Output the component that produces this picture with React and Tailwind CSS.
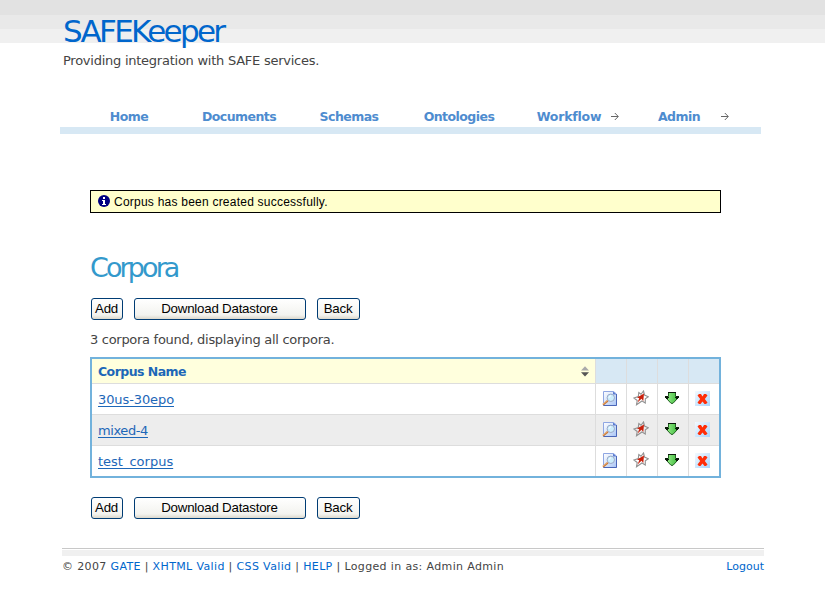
const NAV = [
  { label: "Home" },
  { label: "Documents" },
  { label: "Schemas" },
  { label: "Ontologies" },
  { label: "Workflow", arrow: "ml-[10px]", tracking: "tracking-[-0.2px]" },
  { label: "Admin", arrow: "ml-[21px]" },
];

const ROWS = [
  { name: "30us-30epo", tracking: "tracking-[-0.1px]" },
  { name: "mixed-4", tracking: "tracking-[-0.4px]" },
  { name: "test_corpus", tracking: "tracking-normal" },
];

function MenuArrow() {
  return (
    <svg className="h-[9px] w-[8px]" viewBox="0 0 8 9" fill="none" stroke="#666">
      <path d="M0 4.500h7M3.800 1l3.500 3.500L3.800 8" />
    </svg>
  );
}

function InfoIcon() {
  return (
    <svg className="h-3 w-3" viewBox="0 0 12 12">
      <circle cx="6" cy="6" r="6" fill="#000080" />
      <path d="M5 2h2v2H5zM4 5h3v4h1v1H4V9h1V6H4z" fill="#fff" />
    </svg>
  );
}

function ViewIcon() {
  return (
    <svg className="h-[15px] w-[15px]" viewBox="0 0 15 15">
      <defs>
        <linearGradient id="sheet" x1="0" y1="0" x2="1" y2="1">
          <stop offset="0" stopColor="#fff" />
          <stop offset="1" stopColor="#a9c5f5" />
        </linearGradient>
      </defs>
      <path d="M1.500 .5H11.500L14.500 3V14.500H1.500z" fill="url(#sheet)" stroke="#8fa6e2" />
      <path d="M1.500 14.500h13V3" fill="none" stroke="#4a66b8" />
      <path d="M11 .5V3.500h3.500z" fill="#5a7bd0" />
      <circle cx="8.800" cy="6.800" r="3.700" fill="#cdeefc" stroke="#9aa8c8" />
      <path d="M7 6.800q.3-1.800 2-2" fill="none" stroke="#fff" />
      <path d="M5.800 9.700L1 13.800" stroke="#c87a3c" strokeWidth="2" />
      <path d="M5.400 9.400L1 13" stroke="#f7c48a" strokeWidth=".8" />
    </svg>
  );
}

function StarIcon() {
  return (
    <svg className="h-4 w-4" viewBox="0 0 16 16" fill="none">
      <path
        d="M10.500 1L11.500 5L15.300 6.800L12.300 8.800L12.300 13L9 11L3.500 14.800L4.200 10.500L1 8L5.300 6.500L5.800 2.500L8 4.300z"
        stroke="#929292"
        strokeWidth="1.100"
      />
      <path d="M11 3.500L10.300 11L8.500 8.800L4.500 12.500L6.300 8.300L4 7.500z" fill="#c9200c" />
    </svg>
  );
}

function DownloadIcon() {
  return (
    <svg className="h-[12px] w-[14px]" viewBox="0 0 14 12">
      <defs>
        <linearGradient id="leaf" x1="0" y1="0" x2="1" y2="0">
          <stop offset="0" stopColor="#a0f090" />
          <stop offset="1" stopColor="#38b838" />
        </linearGradient>
      </defs>
      <path
        d="M3.500 .5H10.500V4.500H13.500L12 7L8 11.300H6L2 7L.5 4.500H3.500z"
        fill="url(#leaf)"
        stroke="#226022"
      />
      <path d="M0 4h3v1h1v1H3v1H1V6H0zM14 4h-3v1h-1v1h1v1h2V6h1zM3 0h8v1H3z" fill="#0a180a" />
    </svg>
  );
}

function DeleteIcon() {
  return (
    <svg className="h-[15px] w-[15px]" viewBox="0 0 15 15">
      <defs>
        <linearGradient id="tile" x1="0" y1="0" x2="1" y2="1">
          <stop offset="0" stopColor="#f4faff" />
          <stop offset="1" stopColor="#a8d4fc" />
        </linearGradient>
      </defs>
      <path d="M0 0h15v15H0z" fill="url(#tile)" />
      <path
        d="M4 3h2l1.500 2.500L9 3h2l1.500 1.500L9.800 8l2.700 3.500L11 13H9.500L7.500 10.500L5.500 13H4L2.500 11.500L5.200 8L2.500 4.500z"
        fill="#ff2e08"
      />
    </svg>
  );
}

function SortIcon() {
  return (
    <svg className="h-[11px] w-[8px]" viewBox="0 0 8 11">
      <path d="M0 4.500L4 .3L8 4.500z" fill="#aaa" />
      <path d="M0 6.300h8L4 10.500z" fill="#555" />
    </svg>
  );
}

function Button({ children, width }) {
  return (
    <button
      className={`${width} flex h-[22px] items-center justify-center rounded-[3px] border border-[#003c74] bg-[linear-gradient(#fff,#f3f3ef_80%,#dcd8cc)] pr-px pb-px font-['Liberation_Sans',Arial,sans-serif] text-[13.3px] tracking-[-0.22px] whitespace-nowrap text-black`}
    >
      {children}
    </button>
  );
}

function Buttons() {
  return (
    <div className="ml-px flex gap-[11px]">
      <Button width="w-8">Add</Button>
      <Button width="w-[172px]">Download Datastore</Button>
      <Button width="w-[43px]">Back</Button>
    </div>
  );
}

export default function App() {
  return (
    <div className="h-[596px] w-[825px] overflow-hidden bg-white bg-[linear-gradient(#e2e2e2_0_15px,#e9e9e9_15px_29px,#f0f0f0_29px_43px,#fff_43px)] font-['DejaVu_Sans',Verdana,sans-serif] text-[13px] text-[#444]">
      <header className="h-[107px] pt-[13px] pl-[63px]">
        <h1 className="h-[39px] text-[31px] leading-[37px] tracking-[-2.7px] text-[#06c]">SAFEKeeper</h1>
        <p className="leading-[18px] tracking-[-0.25px]">Providing integration with SAFE services.</p>
      </header>

      <nav className="ml-[60px] flex h-[27px] w-[701px] border-b-[7px] border-[#d7e8f4] pl-[14px] text-[12.5px] font-bold tracking-[-0.55px] text-[#4e8ccf]">
        {NAV.map((n) => (
          <a key={n.label} className="flex h-5 w-[110px] items-center">
            <span className="flex-1" />
            <span className={n.tracking}>{n.label}</span>
            <span className="flex flex-1 items-center pb-[2px]">
              {n.arrow && (
                <span className={n.arrow}>
                  <MenuArrow />
                </span>
              )}
            </span>
          </a>
        ))}
      </nav>

      <main className="mt-14 ml-[90px] w-[631px]">
        <div className="flex h-[23px] items-center gap-1 border border-black bg-[#ffc] pl-[7px] font-['Liberation_Sans',Arial,sans-serif] text-[12px] tracking-[0.23px] text-black">
          <span className="pb-px">
            <InfoIcon />
          </span>
          Corpus has been created successfully.
        </div>

        <h2 className="mt-[38px] h-[47px] text-[27px] leading-[34px] tracking-[-2.9px] text-[#39c]">Corpora</h2>
        <Buttons />
        <p className="mt-[11px] h-[26px] leading-[18px] tracking-[-0.29px]">3 corpora found, displaying all corpora.</p>

        <table className="w-[631px] table-fixed border-separate border-spacing-0 border-2 border-[#72b2dc] text-[#1d67b8]">
          <colgroup>
            <col className="w-[503px]" />
            <col className="w-[31px]" />
            <col className="w-[31px]" />
            <col className="w-[31px]" />
            <col className="w-[31px]" />
          </colgroup>
          <thead>
            <tr className="h-[25px] bg-[#d7e8f4]">
              <th className="border-b border-[#ddd] bg-[#ffd] p-0">
                <div className="flex items-center justify-between pr-[6px] pl-[6px]">
                  <span className="pt-[2px] text-[12.5px] tracking-[-0.55px]">Corpus Name</span>
                  <SortIcon />
                </div>
              </th>
              {[0, 1, 2, 3].map((c) => (
                <th key={c} className="border-b border-l border-[#ddd] p-0" />
              ))}
            </tr>
          </thead>
          <tbody>
            {ROWS.map((row) => (
              <tr key={row.name} className="group h-[31px] even:bg-[#ededed] last:h-[30px]">
                <td className="border-b border-[#ddd] p-0 pt-[2px] pl-[6px] group-last:border-b-0">
                  <a className={`${row.tracking} underline underline-offset-2`}>{row.name}</a>
                </td>
                {[ViewIcon, StarIcon, DownloadIcon, DeleteIcon].map((Icon, i) => (
                  <td key={i} className="border-b border-l border-[#ddd] p-0 pb-[2px] group-last:border-b-0">
                    <div className="flex justify-center pr-[3px]">
                      <Icon />
                    </div>
                  </td>
                ))}
              </tr>
            ))}
          </tbody>
        </table>
        <div className="mt-[19px]">
          <Buttons />
        </div>
      </main>

      <footer className="mt-[29px] ml-[62px] w-[702px] border-t border-[#c8c8c8] pt-px text-[11px]">
        <div className="h-[6px] bg-[#f0f0f0]" />
        <div className="flex justify-between pt-[3px] leading-4 whitespace-nowrap">
          <span className="tracking-[0.36px]">
            © 2007 <a className="text-[#06c]">GATE</a> | <a className="text-[#06c]">XHTML Valid</a> |{" "}
            <a className="text-[#06c]">CSS Valid</a> | <a className="text-[#06c]">HELP</a> | Logged in as: Admin Admin
          </span>
          <a className="text-[#06c]">Logout</a>
        </div>
      </footer>
    </div>
  );
}
